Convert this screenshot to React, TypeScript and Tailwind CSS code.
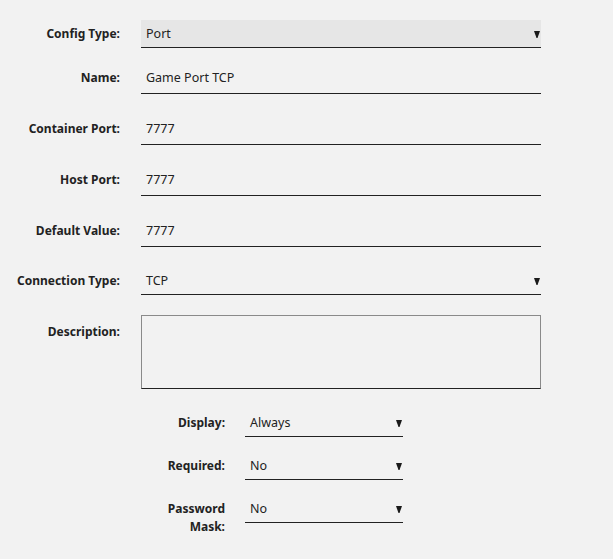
import { ReactNode } from 'react'

const font = { fontFamily: '"Noto Sans", "Open Sans", Arial, sans-serif' }

function Caret() {
  return (
    <svg width="6" height="7" viewBox="0 0 6 7" className="shrink-0">
      <polygon points="0,0 6,0 3.5,7 2.5,7" fill="#1a1a1a" />
    </svg>
  )
}

function Label({ children, className = '' }: { children: ReactNode; className?: string }) {
  return (
    <div className={`w-[120px] shrink-0 text-right text-[12px] font-bold leading-[15px] text-[#222] ${className}`}>
      {children}
    </div>
  )
}

function TextField({ value }: { value: string }) {
  return (
    <div className="w-[400px] h-[32px] border-b border-[#222] pl-[5px] pt-[8px] text-[12.5px] leading-[15px] text-[#222]">
      {value}
    </div>
  )
}

function SelectField({ value, shaded, width = 'w-[400px]' }: { value: string; shaded?: boolean; width?: string }) {
  return (
    <div
      className={`${width} h-[28px] border-b border-[#222] pl-[5px] pr-[1px] pt-[2px] flex items-center justify-between text-[12.5px] text-[#222] ${
        shaded ? 'bg-[#e6e6e6]' : ''
      }`}
    >
      <span>{value}</span>
      <Caret />
    </div>
  )
}

export default function App() {
  return (
    <div style={font} className="min-h-[559px] w-[613px] bg-[#f2f2f2] pt-[20px]">
      <div className="flex flex-col">
        <div className="flex gap-[21px]">
          <Label className="pt-[6px]">Config Type:</Label>
          <SelectField value="Port" shaded />
        </div>

        <div className="flex gap-[21px] mt-[14px]">
          <Label className="pt-[8px]">Name:</Label>
          <TextField value="Game Port TCP" />
        </div>

        <div className="flex gap-[21px] mt-[19px]">
          <Label className="pt-[8px]">Container Port:</Label>
          <TextField value="7777" />
        </div>

        <div className="flex gap-[21px] mt-[19px]">
          <Label className="pt-[8px]">Host Port:</Label>
          <TextField value="7777" />
        </div>

        <div className="flex gap-[21px] mt-[19px]">
          <Label className="pt-[8px]">Default Value:</Label>
          <TextField value="7777" />
        </div>

        <div className="flex gap-[21px] mt-[20px]">
          <Label className="pt-[6px]">Connection Type:</Label>
          <SelectField value="TCP" />
        </div>

        <div className="flex gap-[21px] mt-[20px]">
          <Label className="pt-[9px]">Description:</Label>
          <div className="w-[400px] h-[74px] border border-[#8a8a8a] border-b-[#222]" />
        </div>

        {/* visibility options */}
        <div className="ml-[141px] mt-[20px] flex flex-col gap-[15px]">
          {[
            ['Display:', 'Always'],
            ['Required:', 'No'],
            ['Password Mask:', 'No'],
          ].map(([label, value]) => (
            <div key={label} className="flex gap-[20px]">
              <div className="w-[84px] pt-[5px] text-right text-[12px] font-bold leading-[18px] text-[#222]">
                {label}
              </div>
              <SelectField value={value} width="w-[158px]" />
            </div>
          ))}
        </div>
      </div>
    </div>
  )
}
